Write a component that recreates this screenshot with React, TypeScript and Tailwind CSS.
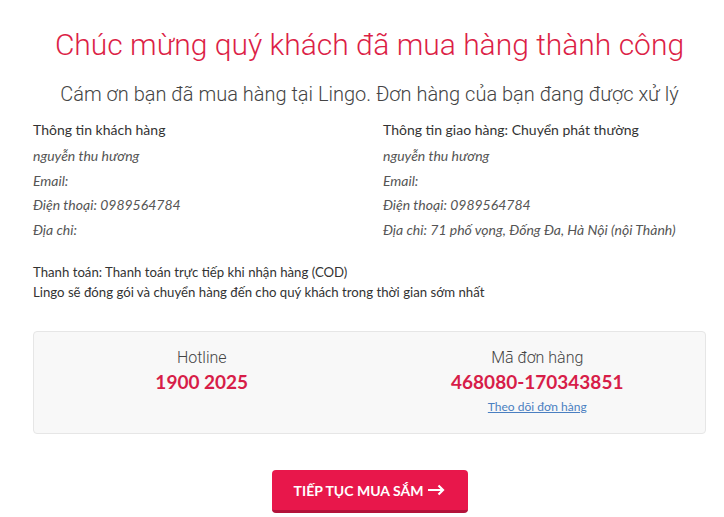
import React from "react";

export default function App() {
  return (
    <div className="min-h-[517px] bg-white pl-[33px] pr-[18px] pt-[26px] text-[#333]" style={{ fontFamily: "Lato, 'Noto Sans', sans-serif" }}>
      <h1 className="text-center text-[30px] font-light leading-[38px] text-[#dc1f47]" style={{ fontFamily: "Roboto, sans-serif" }}>
        Chúc mừng quý khách đã mua hàng thành công
      </h1>
      <h2 className="mt-[16px] text-center text-[20px] font-light leading-[28px] text-[#444]" style={{ fontFamily: "Roboto, sans-serif" }}>
        Cám ơn bạn đã mua hàng tại Lingo. Đơn hàng của bạn đang được xử lý
      </h2>
      <div className="mt-[8px] grid grid-cols-[350px_1fr] text-[14px]">
        <div>
          <div className="leading-[27px] text-[#333]">Thông tin khách hàng</div>
          <div className="italic leading-[25px] text-[#555]">nguyễn thu hương</div>
          <div className="italic leading-[25px] text-[#555]">Email:</div>
          <div className="italic leading-[24.5px] text-[#555]">Điện thoại: 0989564784</div>
          <div className="italic leading-[24.5px] text-[#555]">Địa chỉ:</div>
        </div>
        <div>
          <div className="leading-[27px] text-[#333]">Thông tin giao hàng: Chuyển phát thường</div>
          <div className="italic leading-[25px] text-[#555]">nguyễn thu hương</div>
          <div className="italic leading-[25px] text-[#555]">Email:</div>
          <div className="italic leading-[24.5px] text-[#555]">Điện thoại: 0989564784</div>
          <div className="italic leading-[24.5px] text-[#555]">Địa chỉ: 71 phố vọng, Đống Đa, Hà Nội (nội Thành)</div>
        </div>
      </div>
      <div className="mt-[20px] text-[13.2px] leading-[20px] text-[#333]">
        <div>Thanh toán: Thanh toán trực tiếp khi nhận hàng (COD)</div>
        <div>Lingo sẽ đóng gói và chuyển hàng đến cho quý khách trong thời gian sớm nhất</div>
      </div>
      <div className="mt-[29px] grid h-[103px] grid-cols-2 rounded-[4px] border border-[#e6e6e6] bg-[#f8f8f8] pt-[15px]">
        <div className="flex flex-col items-center">
          <div className="text-[16px] font-light leading-[22px] text-[#444]" style={{ fontFamily: "Roboto, sans-serif" }}>Hotline</div>
          <div className="text-[19px] font-bold leading-[26px] text-[#d71d48]">1900 2025</div>
        </div>
        <div className="flex flex-col items-center">
          <div className="text-[16px] font-light leading-[22px] text-[#444]" style={{ fontFamily: "Roboto, sans-serif" }}>Mã đơn hàng</div>
          <div className="text-[19px] font-bold leading-[26px] text-[#d71d48]">468080-170343851</div>
          <a href="#" className="mt-[3px] text-[12px] leading-[18px] text-[#4a7fc1] underline">Theo dõi đơn hàng</a>
        </div>
      </div>
      <div className="mt-[36px] flex justify-center">
        <button className="flex h-[43px] w-[196px] items-center justify-center gap-[4px] rounded-[4px] border-b-[3px] border-[#b3123a] bg-[#e8174b] text-[14px] font-bold text-white">
          TIẾP TỤC MUA SẮM
          <svg width="18" height="12" viewBox="0 0 18 12" fill="none" stroke="white" strokeWidth="2.2"><path d="M1 6h15M11.5 1.5L16 6l-4.5 4.5" /></svg>
        </button>
      </div>
    </div>
  );
}
